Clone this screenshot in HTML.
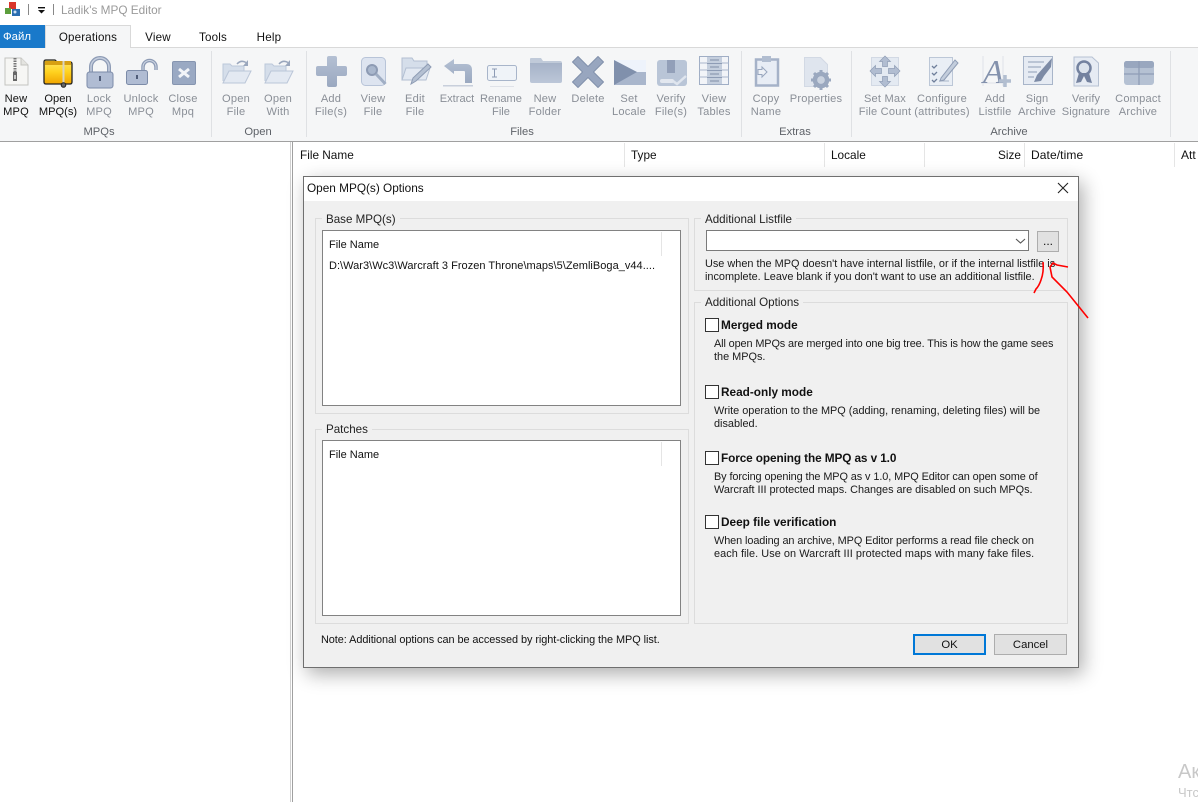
<!DOCTYPE html>
<html><head><meta charset="utf-8"><title>Ladik's MPQ Editor</title>
<style>
html,body{margin:0;padding:0;width:1198px;height:802px;overflow:hidden;background:#fff}
body{position:relative;font-family:"Liberation Sans",sans-serif;font-size:11.6px;color:#1a1a1a}
div{position:absolute;box-sizing:border-box}
.t{white-space:nowrap;line-height:13px}
.c{white-space:nowrap;line-height:13px;transform:translateX(-50%);text-align:center}
.r{font-size:11.1px;letter-spacing:.2px;top:93px}
.g{color:#8a8f97}
.k{color:#111}
.lab{color:#5e6268;font-size:11.2px;top:126px}
.box{border:1px solid #dcdcdc}
.lg{background:#f0f0f0;padding:0 4px;white-space:nowrap;line-height:13px;color:#222}
.list{background:#fff;border:1px solid #828282}
.chk{width:14px;height:14px;background:#fff;border:1px solid #333;left:705px}
.b{font-weight:bold;font-size:11.8px;color:#111;left:721px}
.d{left:714px;color:#1a1a1a;font-size:10.9px}
.btn{background:#e1e1e1;border:1px solid #adadad;text-align:center;line-height:21px;color:#111;font-size:11.3px}
.sep{width:1px;background:#dfe1e4;top:51px;height:86px}
</style></head><body>

<!-- title bar -->
<div class="t" style="left:61px;top:4px;color:#9a9a9a;font-size:11.8px">Ladik's MPQ Editor</div>
<div style="left:28px;top:4px;width:1px;height:11px;background:#888"></div>
<div style="left:53px;top:4px;width:1px;height:11px;background:#888"></div>

<!-- tabs -->
<div style="left:0;top:47px;width:1198px;height:1px;background:#d9d9d9"></div>
<div class="t" style="left:0;top:25px;width:45px;height:23px;background:#1979ca;color:#fff;line-height:25px;padding-left:3px;font-size:11.4px">Файл</div>
<div style="left:45px;top:25px;width:86px;height:24px;background:#f5f6f7;border:1px solid #d9d9d9;border-bottom:0"></div>
<div class="c k" style="left:88px;top:31px;letter-spacing:.15px">Operations</div>
<div class="c k" style="left:158px;top:31px;letter-spacing:.2px">View</div>
<div class="c k" style="left:213px;top:31px;letter-spacing:.2px">Tools</div>
<div class="c k" style="left:269px;top:31px;letter-spacing:.2px">Help</div>

<!-- ribbon -->
<div style="left:0;top:48px;width:1198px;height:93px;background:#f5f6f7"></div>
<div style="left:0;top:141px;width:1198px;height:1px;background:#a0a0a0"></div>
<div class="sep" style="left:211px"></div>
<div class="sep" style="left:306px"></div>
<div class="sep" style="left:741px"></div>
<div class="sep" style="left:851px"></div>
<div class="sep" style="left:1170px"></div>

<div class="c k r" style="left:16px">New<br>MPQ</div>
<div class="c k r" style="left:58px;letter-spacing:0">Open<br>MPQ(s)</div>
<div class="c g r" style="left:99px">Lock<br>MPQ</div>
<div class="c g r" style="left:141px">Unlock<br>MPQ</div>
<div class="c g r" style="left:183px">Close<br>Mpq</div>
<div class="c g r" style="left:236px">Open<br>File</div>
<div class="c g r" style="left:278px">Open<br>With</div>
<div class="c g r" style="left:331px">Add<br>File(s)</div>
<div class="c g r" style="left:373px">View<br>File</div>
<div class="c g r" style="left:415px">Edit<br>File</div>
<div class="c g r" style="left:457px;letter-spacing:0">Extract</div>
<div class="c g r" style="left:501px;letter-spacing:0">Rename<br>File</div>
<div class="c g r" style="left:545px">New<br>Folder</div>
<div class="c g r" style="left:588px">Delete</div>
<div class="c g r" style="left:629px">Set<br>Locale</div>
<div class="c g r" style="left:671px">Verify<br>File(s)</div>
<div class="c g r" style="left:714px">View<br>Tables</div>
<div class="c g r" style="left:766px">Copy<br>Name</div>
<div class="c g r" style="left:816px">Properties</div>
<div class="c g r" style="left:885px">Set Max<br>File Count</div>
<div class="c g r" style="left:942px">Configure<br>(attributes)</div>
<div class="c g r" style="left:995px">Add<br>Listfile</div>
<div class="c g r" style="left:1037px;letter-spacing:.1px">Sign<br>Archive</div>
<div class="c g r" style="left:1086px;letter-spacing:.1px">Verify<br>Signature</div>
<div class="c g r" style="left:1138px">Compact<br>Archive</div>

<div class="c lab" style="left:99px">MPQs</div>
<div class="c lab" style="left:258px">Open</div>
<div class="c lab" style="left:522px">Files</div>
<div class="c lab" style="left:795px">Extras</div>
<div class="c lab" style="left:1009px">Archive</div>

<!-- panes -->
<div style="left:290px;top:142px;width:3px;height:660px;background:#fff;border-right:1px solid #a0a0a0;border-left:1px solid #d0d0d0"></div>
<div class="t k" style="left:300px;top:149px;font-size:11.8px">File Name</div>
<div class="t k" style="left:631px;top:149px;font-size:11.8px">Type</div>
<div class="t k" style="left:831px;top:149px;font-size:11.8px">Locale</div>
<div class="t k" style="left:998px;top:149px;font-size:11.8px">Size</div>
<div class="t k" style="left:1031px;top:149px;font-size:12px;letter-spacing:.1px">Date/time</div>
<div class="t k" style="left:1181px;top:149px;font-size:12px">Att</div>
<div style="left:624px;top:143px;width:1px;height:24px;background:#e5e5e5"></div>
<div style="left:824px;top:143px;width:1px;height:24px;background:#e5e5e5"></div>
<div style="left:924px;top:143px;width:1px;height:24px;background:#e5e5e5"></div>
<div style="left:1024px;top:143px;width:1px;height:24px;background:#e5e5e5"></div>
<div style="left:1174px;top:143px;width:1px;height:24px;background:#e5e5e5"></div>

<!-- watermark -->
<div class="t" style="left:1178px;top:761px;font-size:20px;line-height:22px;color:#c8c8c8">Ак</div>
<div class="t" style="left:1178px;top:786px;font-size:13px;color:#c8c8c8">Чтс</div>

<!-- dialog -->
<div style="left:303px;top:176px;width:776px;height:492px;background:#f0f0f0;border:1px solid #6f6f6f;box-shadow:4px 6px 18px rgba(0,0,0,.32)"></div>
<div style="left:304px;top:177px;width:774px;height:24px;background:#fff"></div>
<div class="t k" style="left:307px;top:182px;font-size:11.8px">Open MPQ(s) Options</div>

<div class="box" style="left:315px;top:218px;width:374px;height:196px"></div>
<div class="lg" style="left:322px;top:213px">Base MPQ(s)</div>
<div class="list" style="left:322px;top:230px;width:359px;height:176px"></div>
<div class="t k" style="left:329px;top:239px;font-size:11px">File Name</div>
<div style="left:661px;top:232px;width:1px;height:24px;background:#e5e5e5"></div>
<div class="t k" style="left:329px;top:260px;font-size:11px;letter-spacing:.03px">D:\War3\Wc3\Warcraft 3 Frozen Throne\maps\5\ZemliBoga_v44....</div>

<div class="box" style="left:315px;top:429px;width:374px;height:195px"></div>
<div class="lg" style="left:322px;top:423px">Patches</div>
<div class="list" style="left:322px;top:440px;width:359px;height:176px"></div>
<div class="t k" style="left:329px;top:449px;font-size:11px">File Name</div>
<div style="left:661px;top:442px;width:1px;height:24px;background:#e5e5e5"></div>

<div class="box" style="left:694px;top:218px;width:374px;height:73px"></div>
<div class="lg" style="left:701px;top:213px">Additional Listfile</div>
<div style="left:706px;top:230px;width:323px;height:21px;background:#fff;border:1px solid #7a7a7a"></div>
<div class="btn" style="left:1037px;top:231px;width:22px;height:21px;font-size:12px;line-height:18px">...</div>
<div class="t" style="left:705px;top:258px;font-size:10.9px;color:#1a1a1a">Use when the MPQ doesn't have internal listfile, or if the internal listfile is</div>
<div class="t" style="left:705px;top:271px;font-size:10.9px;color:#1a1a1a">incomplete. Leave blank if you don't want to use an additional listfile.</div>

<div class="box" style="left:694px;top:302px;width:374px;height:322px"></div>
<div class="lg" style="left:701px;top:296px">Additional Options</div>

<div class="chk" style="top:318px"></div>
<div class="t b" style="top:319px">Merged mode</div>
<div class="t d" style="top:338px;letter-spacing:-.116px">All open MPQs are merged into one big tree. This is how the game sees</div>
<div class="t d" style="top:351px">the MPQs.</div>

<div class="chk" style="top:385px"></div>
<div class="t b" style="top:386px">Read-only mode</div>
<div class="t d" style="top:405px">Write operation to the MPQ (adding, renaming, deleting files) will be</div>
<div class="t d" style="top:418px">disabled.</div>

<div class="chk" style="top:451px"></div>
<div class="t b" style="top:452px;letter-spacing:-.1px">Force opening the MPQ as v 1.0</div>
<div class="t d" style="top:471px;letter-spacing:-.09px">By forcing opening the MPQ as v 1.0, MPQ Editor can open some of</div>
<div class="t d" style="top:484px;letter-spacing:-.03px">Warcraft III protected maps. Changes are disabled on such MPQs.</div>

<div class="chk" style="top:515px"></div>
<div class="t b" style="top:516px">Deep file verification</div>
<div class="t d" style="top:535px;letter-spacing:-.09px">When loading an archive, MPQ Editor performs a read file check on</div>
<div class="t d" style="top:548px;letter-spacing:.06px">each file. Use on Warcraft III protected maps with many fake files.</div>

<div class="t k" style="left:321px;top:634px;font-size:10.9px;letter-spacing:-.055px">Note: Additional options can be accessed by right-clicking the MPQ list.</div>
<div class="btn" style="left:913px;top:634px;width:73px;height:21px;border:2px solid #0078d7;line-height:19px">OK</div>
<div class="btn" style="left:994px;top:634px;width:73px;height:21px;line-height:20px">Cancel</div>

<!-- icons overlay -->
<svg width="1198" height="802" viewBox="0 0 1198 802" style="position:absolute;left:0;top:0;pointer-events:none">
<defs>
<linearGradient id="y" x1="0" y1="0" x2="0" y2="1"><stop offset="0" stop-color="#ffe96a"/><stop offset=".5" stop-color="#ffd21f"/><stop offset="1" stop-color="#f0a400"/></linearGradient>
<linearGradient id="f" x1="0" y1="0" x2="0" y2="1"><stop offset="0" stop-color="#a6b3c8"/><stop offset="1" stop-color="#bcc7d8"/></linearGradient>
<linearGradient id="p" x1="0" y1="0" x2="0" y2="1"><stop offset="0" stop-color="#b4c0d3"/><stop offset="1" stop-color="#9aa8c0"/></linearGradient>
</defs>
<!-- app icon -->
<rect x="9" y="2" width="7" height="7" fill="#d9352b"/><rect x="5" y="8" width="6" height="6" fill="#5c9e3c"/><rect x="12" y="9" width="8" height="7" fill="#2a6db0"/><circle cx="15" cy="12" r="1.500" fill="#cfe0f2"/>
<!-- qat dropdown -->
<rect x="38" y="7" width="7" height="1.400" fill="#111"/><path d="M38 10h7l-3.500 3.500z" fill="#111"/>

<g style="filter:blur(.3px)">
<!-- New MPQ -->
<path d="M5 58h16l7 7v20H5z" fill="#f6f6f4" stroke="#c4c4c0"/><path d="M21 58v7h7" fill="#e4e4e0" stroke="#c4c4c0"/>
<path d="M15 58v14" stroke="#777" stroke-width="3" stroke-dasharray="1.500 1"/><rect x="13" y="72" width="4" height="9" fill="#666"/><rect x="14.200" y="75" width="1.600" height="4" fill="#ddd"/>
<!-- Open MPQ -->
<path d="M44 62q0-2 2-2h9l2 2h13q2 0 2 2v18q0 2-2 2H46q-2 0-2-2z" fill="url(#y)" stroke="#222" stroke-width="1.300"/>
<rect x="45" y="61" width="26" height="4" fill="#d7a012"/>
<rect x="62.500" y="61" width="2" height="23" fill="#d8d4c0"/><circle cx="63.500" cy="85" r="2.300" fill="#666" stroke="#222"/>
<!-- Lock -->
<path d="M91 74v-7a9 9 0 0 1 18 0v7" fill="none" stroke="#8d9bb5" stroke-width="4"/><path d="M91 74v-7a9 9 0 0 1 18 0v7" fill="none" stroke="#c5cede" stroke-width="1.500"/>
<rect x="87" y="72" width="26" height="16" rx="2.500" fill="#b0bcd3" stroke="#7c8ba8"/><rect x="99" y="76" width="2" height="5" fill="#4f5c78"/>
<!-- Unlock -->
<path d="M143 72v-5a6.500 6.500 0 0 1 13 0v3" fill="none" stroke="#8d9bb5" stroke-width="3.500"/><path d="M143 72v-5a6.500 6.500 0 0 1 13 0v3" fill="none" stroke="#cfd7e4" stroke-width="1"/>
<rect x="126.500" y="70.500" width="21" height="14" rx="2" fill="#b0bcd3" stroke="#7c8ba8"/><rect x="136" y="75" width="2" height="4" fill="#4f5c78"/>
<!-- Close -->
<rect x="172.500" y="61.500" width="23" height="23" rx="1.500" fill="#9aa9c3" stroke="#8695b0"/><path d="M179 69l10 8M189 69l-10 8" stroke="#f2f4f8" stroke-width="3"/>
<!-- Open File / With -->
<path d="M223 81V64h7l2 2h12v5" fill="#d5deea" stroke="#bcc8da"/><path d="M223 83l6-12h22l-6 12z" fill="#e3e9f2" stroke="#bac6d8"/><path d="M237 64q4-4.500 9-1.500" fill="none" stroke="#9aa7bd" stroke-width="1.500"/><path d="M248 60v6h-5z" fill="#9aa7bd"/>
<g transform="translate(42)"><path d="M223 81V64h7l2 2h12v5" fill="#d5deea" stroke="#bcc8da"/><path d="M223 83l6-12h22l-6 12z" fill="#e3e9f2" stroke="#bac6d8"/><path d="M237 64q4-4.500 9-1.500" fill="none" stroke="#9aa7bd" stroke-width="1.500"/><path d="M248 60v6h-5z" fill="#9aa7bd"/></g>
<!-- Add -->
<path d="M327 58q0-2 2-2h6q2 0 2 2v8h8q2 0 2 2v6q0 2-2 2h-8v9q0 2-2 2h-6q-2 0-2-2v-9h-9q-2 0-2-2v-6q0-2 2-2h9z" fill="url(#p)"/>
<!-- View -->
<rect x="361.500" y="57.500" width="24" height="28" rx="4" fill="#dde4f0" stroke="#b8c4d8"/><circle cx="372" cy="70" r="5" fill="#a9b7cd" stroke="#8d9bb4" stroke-width="2"/><path d="M376 74l9.500 10" stroke="#a0aec4" stroke-width="3"/>
<!-- Edit -->
<path d="M402 80V58h10l2 3h13v9" fill="#d5deea" stroke="#b2bfd2"/><path d="M402 80l4-12h24l-4 12z" fill="#e3e9f2" stroke="#b2bfd2"/><path d="M411 84l2-6 15-14 3 3-15 14z" fill="#b4c0d2" stroke="#8e9cb4"/>
<!-- Extract -->
<path d="M444 66l10-7v5h12q6 0 6 6v13h-7V72q0-1-1-1h-10v3z" fill="url(#p)"/><rect x="443" y="85" width="30" height="1.500" fill="#c8cfdb"/>
<!-- Rename -->
<rect x="487.500" y="65.500" width="29" height="15" rx="2" fill="#eff3f8" stroke="#a8b5ca"/><path d="M492 69h5M492 77h5M494.500 69v8" stroke="#8d9bb5"/><rect x="490" y="86" width="24" height="1" fill="#dfe2e8"/>
<!-- New Folder -->
<path d="M530 59q0-1 1-1h10l2 3h17q2 0 2 2v3h-32z" fill="#c0cad9"/><path d="M530 63h32v18q0 2-2 2h-28q-2 0-2-2z" fill="url(#f)"/>
<!-- Delete -->
<path d="M572.500 62l5.500-5.500 10 10 10-10 5.500 5.500-10 10 10 10-5.500 5.500-10-10-10 10-5.500-5.500 10-10z" fill="#98a6bf" stroke="#8291ac" stroke-linejoin="round"/>
<!-- Set Locale -->
<rect x="614" y="60" width="32" height="12" fill="#eef3fb"/><rect x="614" y="72" width="32" height="13" fill="#a9b6cc"/><path d="M614 60l23 12-23 13z" fill="#8090ac"/>
<!-- Verify -->
<rect x="657" y="60" width="30" height="26" rx="3" fill="#b9c5d7"/><rect x="667" y="60" width="8" height="13" fill="#929fb8"/><rect x="660" y="79" width="14" height="4" rx="2" fill="#e2e7ef"/><path d="M673 81l4 3 9-8" fill="none" stroke="#dfe5ee" stroke-width="2.500"/>
<!-- View Tables -->
<rect x="699.500" y="56.500" width="29" height="28" fill="#f2f4f8" stroke="#a0aec5"/><path d="M699 63h30M699 70h30M699 77h30" stroke="#a9b6cb"/><rect x="707" y="57" width="15" height="27" fill="#c4cedd"/><path d="M707 63.500h15M707 70.500h15M707 77.500h15" stroke="#8e9cb5"/><path d="M710 60h9M710 67h9M710 74h9M710 81h9" stroke="#7f8da7"/>
<!-- Copy Name -->
<rect x="756" y="59.500" width="22" height="26" fill="#e8edf5" stroke="#a5b2c8" stroke-width="2.500"/><rect x="762" y="56" width="9" height="6" fill="#b1bdd0"/><path d="M758 69.500h4V67l5 5-5 5v-2.500h-4z" fill="#eef1f6" stroke="#98a6be"/>
<!-- Properties -->
<path d="M804.500 57.500h16l7 7v22h-23z" fill="#dfe5ee" stroke="#d2d9e4"/><circle cx="821" cy="80" r="6" fill="none" stroke="#9aa8bf" stroke-width="4.500"/><path d="M821 70v3M821 87v3M811 80h3M828 80h3M814 73l2 2M826 85l2 2M828 73l-2 2M816 85l-2 2" stroke="#9aa8bf" stroke-width="3"/><circle cx="821" cy="80" r="3.500" fill="#c9d2df"/>
<!-- Set Max -->
<rect x="871.500" y="57.500" width="27" height="28" fill="#e4eaf2" stroke="#d2d9e4"/><path d="M885 56l5.500 5.500h-3v5h-5v-5h-3zM885 87l5.500-5.500h-3v-5h-5v5h-3zM870 71l5.500-5.500v3h6v5h-6v3zM900 71l-5.500-5.500v3h-6v5h6v3z" fill="#b1bdd1" stroke="#8f9db5" stroke-width=".7"/>
<!-- Configure -->
<rect x="929.500" y="57.500" width="23" height="28" fill="#e9eef5" stroke="#bcc7d7"/><path d="M932 66l2 2 3-3M932 73l2 2 3-3M932 80l2 2 3-3" fill="none" stroke="#6f7f9b" stroke-width="1.300"/><path d="M939 81h10" stroke="#a9b5c9"/><path d="M941 78l-1 3 4-1 14-17-3-3z" fill="#c3cddc" stroke="#8f9db5"/>
<!-- Add Listfile -->
<path d="M981 83h26M983 56v30M1003 56v30" stroke="#dee3ea"/>
<text x="983" y="83" font-family="Liberation Serif,serif" font-style="italic" font-size="34" fill="#8492ad">A</text>
<path d="M1005 75v12M999 81h12" stroke="#b2bed0" stroke-width="3.500"/>
<!-- Sign -->
<rect x="1023.500" y="56.500" width="29" height="28" fill="#e6ebf3" stroke="#a8b5c9"/><path d="M1028 62h16M1028 67h13M1028 72h9M1028 77h6" stroke="#8e9cb5"/><path d="M1034 82l3-7 15-17-1 9-7 9-3 5z" fill="#7d8ba6"/>
<!-- Verify Signature -->
<path d="M1074 57h18l6.500 6v23H1074z" fill="#e6ebf3" stroke="#b7c2d3"/><circle cx="1084" cy="68" r="6.500" fill="#dce3ec" stroke="#74829f" stroke-width="2.500"/><path d="M1079 73l-3 10 5-1 3-6 3 6 5 1-3-10z" fill="#74829f"/>
<!-- Compact -->
<rect x="1124" y="61" width="30" height="24" rx="3" fill="#b5c1d3"/><rect x="1124" y="61" width="30" height="7" rx="2.500" fill="#99a7bf"/><path d="M1124 74h30M1139 61v24" stroke="#8f9db6" stroke-width="1.300"/>
</g>

<!-- dialog X -->
<path d="M1058 183l10 10M1068 183l-10 10" stroke="#222" stroke-width="1.100"/>
<!-- combo arrow -->
<path d="M1016 239l4.500 4 4.500-4" fill="none" stroke="#555" stroke-width="1.100"/>
<!-- red scribble -->
<path d="M1043 262q1 10-2 18-2 6-5 9l-2 4" fill="none" stroke="#f00" stroke-width="1.600"/>
<path d="M1068 267l-11-2-4-2-3 4 2 10 15 15 21 26" fill="none" stroke="#f00" stroke-width="1.600"/>
</svg>
</body></html>
